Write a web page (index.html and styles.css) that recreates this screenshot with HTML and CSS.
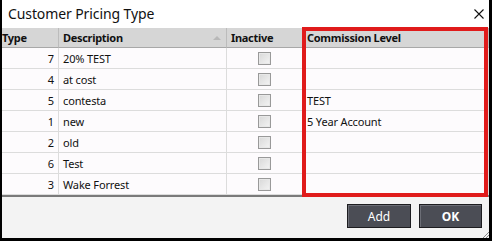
FILE: index.html
```html
<!DOCTYPE html>
<html>
<head>
<meta charset="utf-8">
<link rel="stylesheet" href="styles.css">
</head>
<body>
<div class="window">
  <div class="titlebar">
    <span class="title">Customer Pricing Type</span>
    <svg class="close" width="10" height="10" viewBox="0 0 10 10"><path d="M0.5 0.5 L9.5 9.5 M9.5 0.5 L0.5 9.5" stroke="#111" stroke-width="1.1" fill="none"/></svg>
  </div>
  <div class="grid">
    <div class="hd c-type">Type</div>
    <div class="hd c-desc">Description<span class="sort"></span></div>
    <div class="hd c-inact">Inactive</div>
    <div class="hd c-comm">Commission Level</div>

    <div class="cell c-type">7</div><div class="cell c-desc">20% TEST</div><div class="cell c-inact"><span class="cb"></span></div><div class="cell c-comm"></div>
    <div class="cell c-type">4</div><div class="cell c-desc">at cost</div><div class="cell c-inact"><span class="cb"></span></div><div class="cell c-comm"></div>
    <div class="cell c-type">5</div><div class="cell c-desc">contesta</div><div class="cell c-inact"><span class="cb"></span></div><div class="cell c-comm">TEST</div>
    <div class="cell c-type">1</div><div class="cell c-desc">new</div><div class="cell c-inact"><span class="cb"></span></div><div class="cell c-comm">5 Year Account</div>
    <div class="cell c-type">2</div><div class="cell c-desc">old</div><div class="cell c-inact"><span class="cb"></span></div><div class="cell c-comm"></div>
    <div class="cell c-type">6</div><div class="cell c-desc">Test</div><div class="cell c-inact"><span class="cb"></span></div><div class="cell c-comm"></div>
    <div class="cell c-type">3</div><div class="cell c-desc">Wake Forrest</div><div class="cell c-inact"><span class="cb"></span></div><div class="cell c-comm"></div>
  </div>
  <div class="footer">
    <button class="btn btn-add">Add</button>
    <button class="btn btn-ok">OK</button>
  </div>
  <svg class="grip" width="6" height="6" viewBox="0 0 6 6"><path d="M6 0 L0 6 M6 3 L3 6" stroke="#888" stroke-width="1" fill="none"/></svg>
  <div class="highlight"></div>
</div>
</body>
</html>
```

FILE: styles.css
```css
html, body {
  margin: 0;
  padding: 0;
  background: #000;
}
body {
  width: 492px;
  height: 241px;
  overflow: hidden;
  font-family: "Noto Sans", "Open Sans", sans-serif;
}
.window {
  position: relative;
  box-sizing: border-box;
  width: 492px;
  height: 241px;
  border-left: 2px solid #000;
  border-right: 3px solid #000;
  border-bottom: 3px solid #000;
  background: #f3f3f3;
  display: flex;
  flex-direction: column;
}
.titlebar {
  height: 28px;
  background: #fff;
  display: flex;
  align-items: center;
  justify-content: space-between;
  padding: 0 4px 2px 6px;
  box-sizing: border-box;
}
.title {
  font-size: 14px;
  color: #111;
  letter-spacing: -0.1px;
}
.close {
  margin-right: 1px;
  margin-top: 1px;
}
.grid {
  display: grid;
  grid-template-columns: 57px 168px 76px 1fr;
  grid-auto-rows: 21px;
  grid-template-rows: 20px;
  background: #fdfbfd;
  border-bottom: 2px solid #7a7a7a;
}
.hd {
  background: #d6d6d6;
  font-weight: bold;
  font-size: 11px;
  letter-spacing: -0.3px;
  color: #111;
  border-right: 1px solid #bcbcbc;
  border-bottom: 1px solid #a8a8a8;
  display: flex;
  align-items: center;
  padding-left: 4px;
  box-sizing: border-box;
  position: relative;
}
.hd.c-type { padding-left: 0; }
.sort {
  position: absolute;
  right: 5px;
  top: 8px;
  width: 0;
  height: 0;
  border-left: 4px solid transparent;
  border-right: 4px solid transparent;
  border-bottom: 4px solid #b8b8b8;
}
.cell {
  font-size: 11px;
  letter-spacing: -0.15px;
  color: #111;
  border-right: 1px solid #dcdcdc;
  border-bottom: 1px solid #dcdcdc;
  display: flex;
  align-items: center;
  padding-left: 4px;
  box-sizing: border-box;
}
.cell.c-type {
  justify-content: flex-end;
  padding-right: 4px;
}
.cell.c-inact {
  justify-content: center;
  padding-left: 0;
}
.cb {
  width: 11px;
  height: 11px;
  border: 1px solid #999;
  background: linear-gradient(135deg, #d8d8d8, #f4f4f4);
  box-shadow: inset 0 0 0 1px #e8e8e8;
}
.footer {
  flex: 1;
  display: flex;
  justify-content: flex-end;
  align-items: flex-start;
  gap: 8px;
  padding: 7px 7px 0 0;
}
.btn {
  height: 24px;
  background: #4b4d55;
  color: #fff;
  font-family: "Noto Sans", "Open Sans", sans-serif;
  font-size: 12px;
  border: 1px solid #1d1d20;
  box-shadow: inset 1px 1px 0 #6c6e76;
  padding: 0;
}
.btn-add { width: 64px; }
.btn-ok { width: 63px; font-weight: bold; }
.grip {
  position: absolute;
  right: 0;
  bottom: 0;
}
.highlight {
  position: absolute;
  left: 300px;
  top: 27px;
  width: 186px;
  height: 170px;
  box-sizing: border-box;
  border: 4px solid #e01b1b;
}
```
